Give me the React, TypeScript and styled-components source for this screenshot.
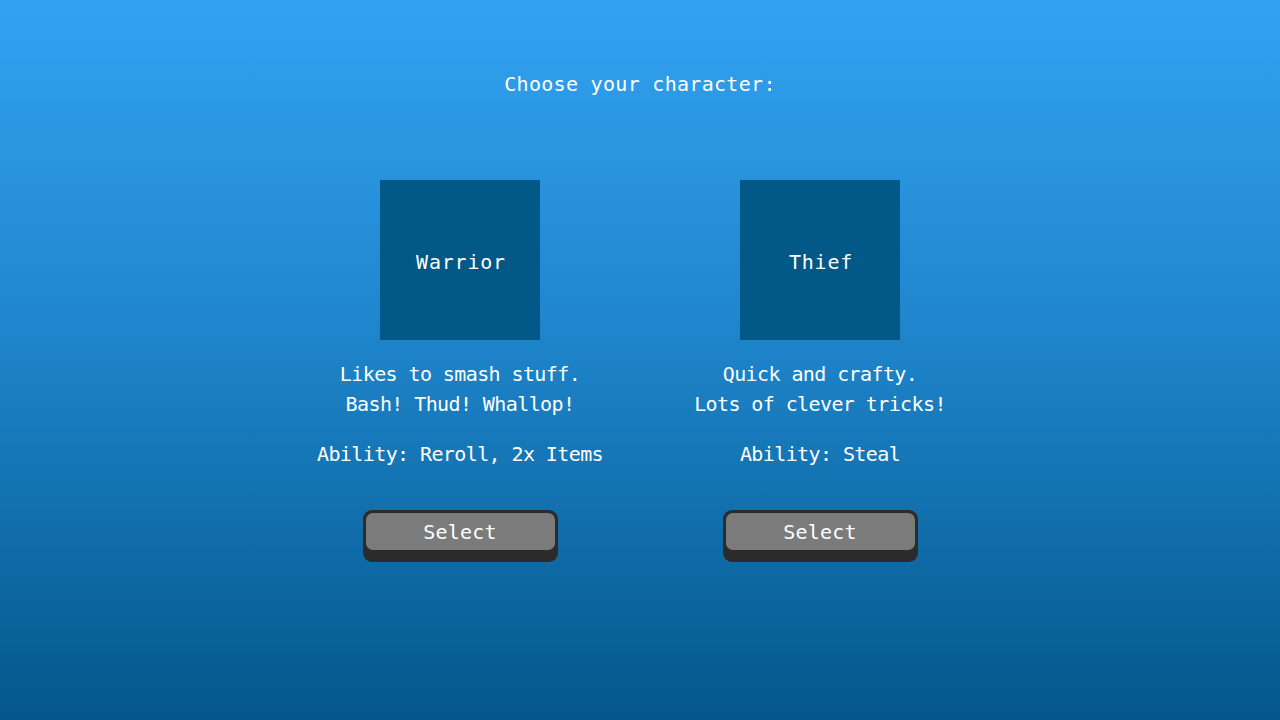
import React from "react";
import styled, { createGlobalStyle } from "styled-components";

const Global = createGlobalStyle`
  html, body { margin: 0; padding: 0; }
  body {
    font-family: "DejaVu Sans Mono", "Liberation Mono", monospace;
    color: #ffffff;
    -webkit-font-smoothing: none;
  }
`;

const Screen = styled.div`
  width: 1280px;
  height: 720px;
  background: linear-gradient(to bottom, #33a2f2 0%, #1f86cd 45%, #03578a 100%);
  display: flex;
  flex-direction: column;
  align-items: center;
  overflow: hidden;
`;

const Title = styled.div`
  margin-top: 69px;
  font-size: 20px;
  line-height: 30px;
  letter-spacing: 0.3px;
`;

const Columns = styled.div`
  margin-top: 81px;
  display: grid;
  grid-template-columns: 320px 320px;
  column-gap: 40px;
`;

const Column = styled.div`
  display: flex;
  flex-direction: column;
  align-items: center;
`;

const Portrait = styled.div`
  width: 160px;
  height: 160px;
  background: #025887;
  display: flex;
  align-items: center;
  justify-content: center;
  font-size: 20px;
  line-height: 30px;
  letter-spacing: 0.8px;
  padding-top: 3px;
  padding-left: 2px;
  box-sizing: border-box;
`;

const Desc = styled.div`
  margin-top: 19px;
  font-size: 20px;
  line-height: 30px;
  text-align: center;
  letter-spacing: -0.6px;
`;

const Ability = styled.div`
  margin-top: 20px;
  font-size: 20px;
  line-height: 30px;
  letter-spacing: -0.6px;
`;

const Button = styled.button`
  margin-top: 41px;
  width: 195px;
  height: 52px;
  padding: 3px 3px 12px;
  border: none;
  border-radius: 9px;
  background: #2b2b2b;
  box-sizing: border-box;
  cursor: pointer;
  display: flex;
`;

const Face = styled.span`
  flex: 1;
  border-radius: 7px;
  background: #7b7b7b;
  color: #ffffff;
  font-family: "DejaVu Sans Mono", "Liberation Mono", monospace;
  font-size: 20px;
  display: flex;
  align-items: center;
  justify-content: center;
  letter-spacing: 0.2px;
`;

const characters = [
  {
    name: "Warrior",
    lines: ["Likes to smash stuff.", "Bash! Thud! Whallop!"],
    ability: "Ability: Reroll, 2x Items",
  },
  {
    name: "Thief",
    lines: ["Quick and crafty.", "Lots of clever tricks!"],
    ability: "Ability: Steal",
  },
];

export default function App() {
  return (
    <>
      <Global />
      <Screen>
        <Title>Choose your character:</Title>
        <Columns>
          {characters.map((c) => (
            <Column key={c.name}>
              <Portrait>{c.name}</Portrait>
              <Desc>
                {c.lines[0]}
                <br />
                {c.lines[1]}
              </Desc>
              <Ability>{c.ability}</Ability>
              <Button>
                <Face>Select</Face>
              </Button>
            </Column>
          ))}
        </Columns>
      </Screen>
    </>
  );
}
